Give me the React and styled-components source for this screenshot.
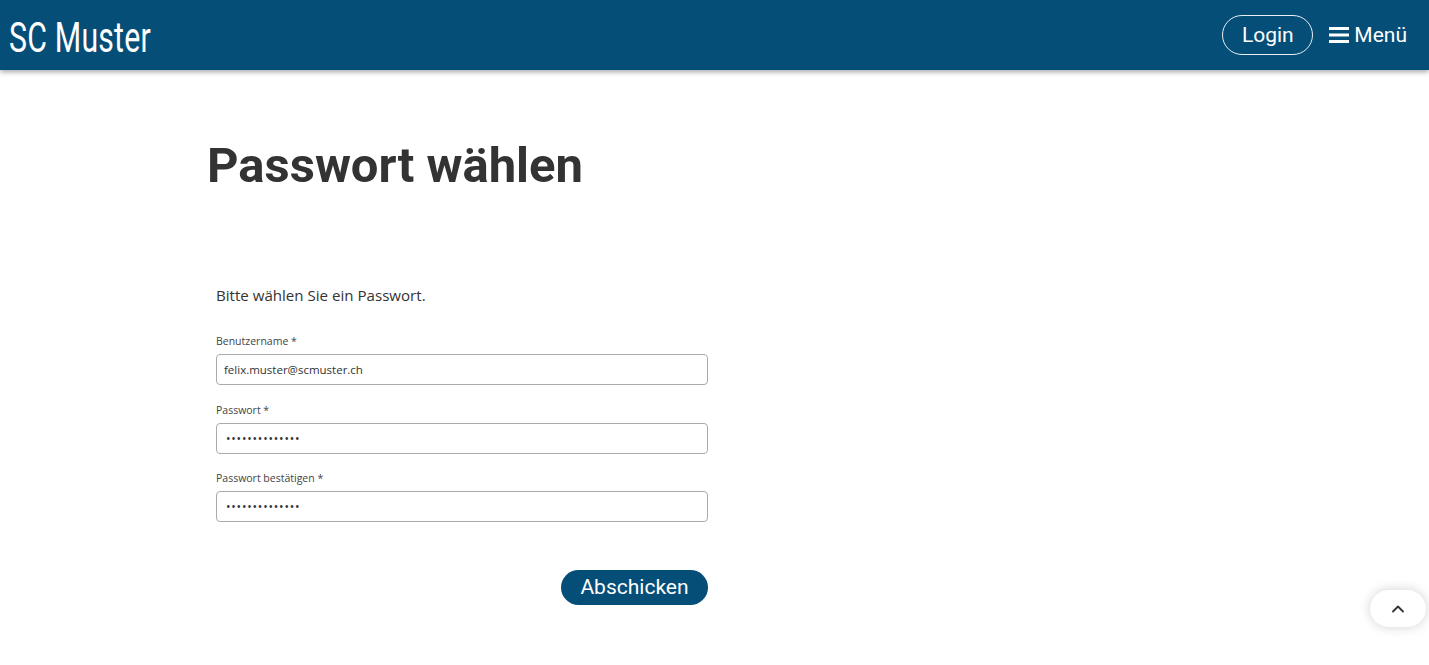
import styled, { createGlobalStyle } from "styled-components";

const GlobalStyle = createGlobalStyle`
  body {
    margin: 0;
    background: #fff;
    font-family: "Open Sans", "Liberation Sans", sans-serif;
    color: #333;
  }
  * { box-sizing: border-box; }
`;

const Page = styled.div`
  position: relative;
  min-height: 665px;
`;

const TopBar = styled.header`
  height: 70px;
  background: #054e78;
  box-shadow: 0 2px 5px rgba(0, 0, 0, 0.35);
  display: flex;
  align-items: center;
  justify-content: space-between;
  padding: 0 22px 0 9px;
`;

const Logo = styled.div`
  font-family: "Roboto", sans-serif;
  font-size: 42px;
  color: #fff;
  letter-spacing: 0.3px;
  transform: scaleX(0.72);
  transform-origin: left center;
  white-space: nowrap;
  margin-top: 4px;
`;

const NavRight = styled.nav`
  display: flex;
  align-items: center;
  gap: 18px;
`;

const LoginButton = styled.button`
  font-family: "Roboto", sans-serif;
  font-size: 21px;
  color: #fff;
  background: transparent;
  border: 1px solid #e8eef2;
  border-radius: 20px;
  height: 40px;
  width: 91px;
  padding: 0;
  margin-right: -2px;
`;

const MenuButton = styled.button`
  display: flex;
  align-items: center;
  gap: 5px;
  font-family: "Roboto", sans-serif;
  font-size: 21px;
  color: #fff;
  background: transparent;
  border: none;
  padding: 0;
`;

const Main = styled.main`
  padding: 68px 0 0 207px;
`;

const Title = styled.h1`
  font-family: "Roboto", sans-serif;
  font-weight: 700;
  font-size: 49px;
  color: #333;
  margin: 0;
  line-height: 56px;
`;

const Form = styled.form`
  width: 492px;
  margin: 91px 0 0 9px;
  display: flex;
  flex-direction: column;
`;

const Intro = styled.p`
  font-size: 15.1px;
  color: #333;
  margin: 0 0 29px;
`;

const Field = styled.div`
  display: flex;
  flex-direction: column;
  margin-bottom: 17.5px;
`;

const Label = styled.label`
  font-size: 10.5px;
  color: #444;
  margin-bottom: 6px;
`;

const Input = styled.input`
  height: 31px;
  border: 1px solid #aaa;
  border-radius: 4px;
  padding: 0 7px;
  font-family: "Open Sans", sans-serif;
  font-size: 11.5px;
  color: #333;
  outline: none;
  ${(p) => p.type === "password" && `letter-spacing: 0.8px; font-size: 12px; padding-left: 9px;`}
`;

const Actions = styled.div`
  display: flex;
  justify-content: flex-end;
  margin-top: 30px;
`;

const SubmitButton = styled.button`
  font-family: "Roboto", sans-serif;
  font-size: 21px;
  color: #fff;
  background: #054e78;
  border: none;
  border-radius: 18px;
  height: 35px;
  width: 147px;
  padding: 0;
`;

const ScrollTop = styled.button`
  position: absolute;
  right: 3px;
  top: 590px;
  width: 56px;
  height: 37px;
  border: none;
  border-radius: 19px;
  background: #fff;
  box-shadow: 0 0 12px rgba(0, 0, 0, 0.18);
  display: flex;
  align-items: center;
  justify-content: center;
`;

function Hamburger() {
  return (
    <svg width="20" height="18" viewBox="0 0 20 18">
      <rect x="0" y="1" width="20" height="3" fill="#fff" />
      <rect x="0" y="7.5" width="20" height="3" fill="#fff" />
      <rect x="0" y="14" width="20" height="3" fill="#fff" />
    </svg>
  );
}

export default function App() {
  return (
    <Page>
      <GlobalStyle />
      <TopBar>
        <Logo>SC Muster</Logo>
        <NavRight>
          <LoginButton>Login</LoginButton>
          <MenuButton>
            <Hamburger />
            Menü
          </MenuButton>
        </NavRight>
      </TopBar>
      <Main>
        <Title>Passwort wählen</Title>
        <Form>
          <Intro>Bitte wählen Sie ein Passwort.</Intro>
          <Field>
            <Label>Benutzername *</Label>
            <Input type="text" defaultValue="felix.muster@scmuster.ch" />
          </Field>
          <Field>
            <Label>Passwort *</Label>
            <Input type="password" defaultValue="felixmuster123" />
          </Field>
          <Field>
            <Label>Passwort bestätigen *</Label>
            <Input type="password" defaultValue="felixmuster123" />
          </Field>
          <Actions>
            <SubmitButton type="button">Abschicken</SubmitButton>
          </Actions>
        </Form>
      </Main>
      <ScrollTop>
        <svg width="20" height="20" viewBox="0 0 24 24" fill="none" stroke="#333" strokeWidth="2.2" strokeLinecap="round" strokeLinejoin="round">
          <polyline points="6 15 12 9 18 15" />
        </svg>
      </ScrollTop>
    </Page>
  );
}
